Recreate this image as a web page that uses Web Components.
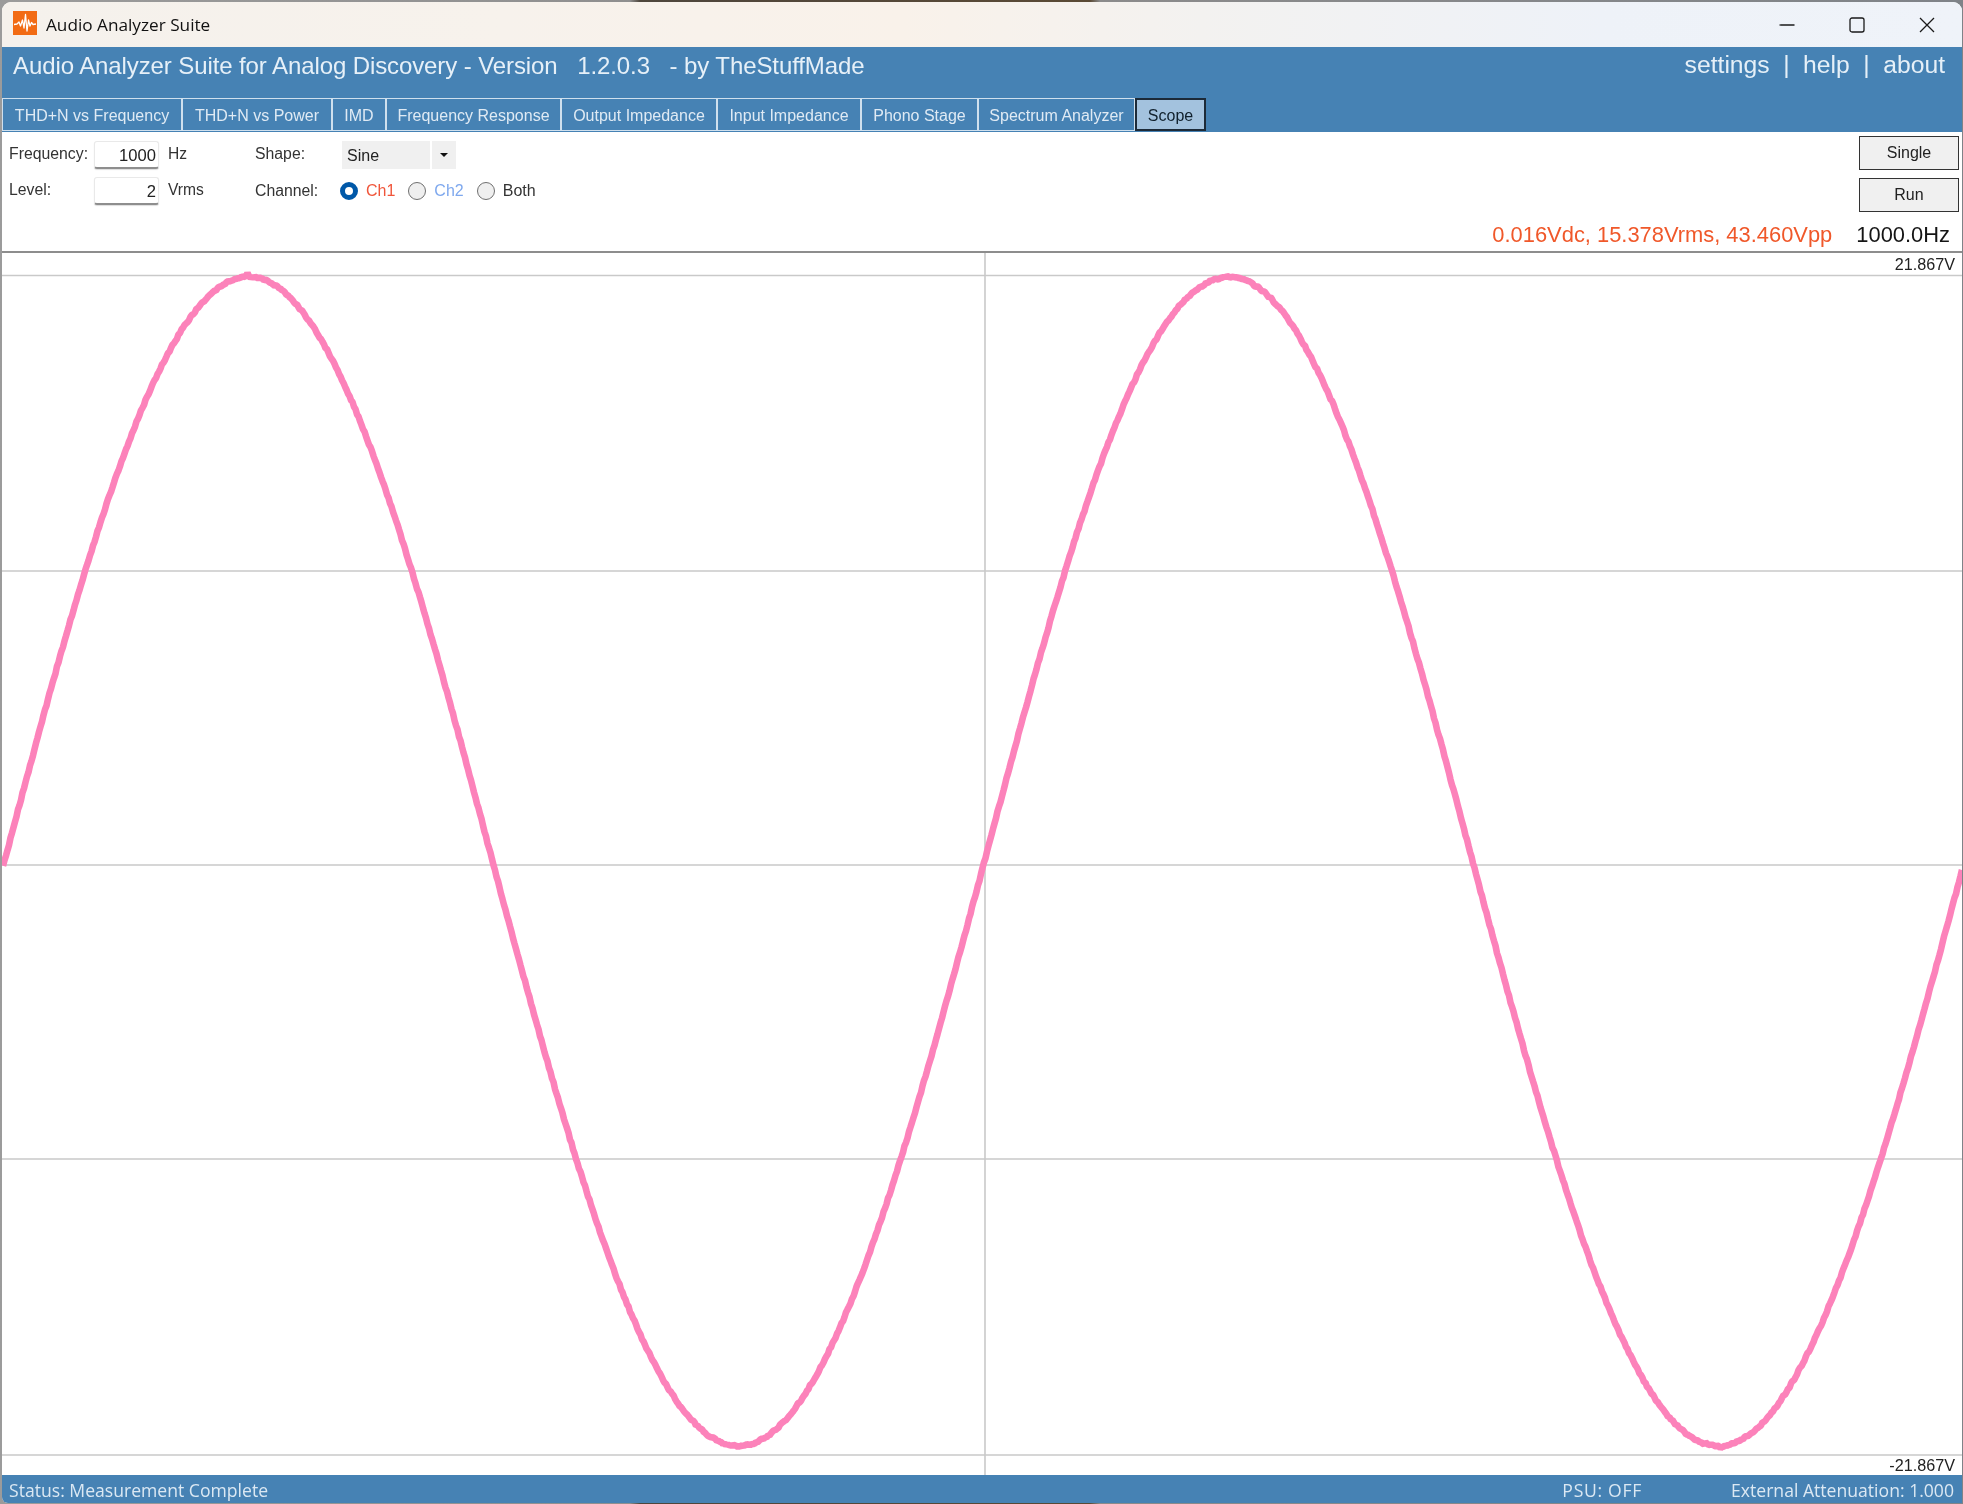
<!DOCTYPE html>
<html lang="en"><head><meta charset="utf-8"><title>Audio Analyzer Suite</title>
<style>
html,body{margin:0;padding:0;width:1963px;height:1504px;overflow:hidden}
body{background:linear-gradient(90deg,#9b9b9b 0,#8f8f8f 630px,#4e463c 640px,#5a4a35 1090px,#8b8b8b 1100px,#7f8388 1963px);font-family:"Liberation Sans",Arial,sans-serif}
</style></head><body>
<app-window>
  <title-bar>Audio Analyzer Suite</title-bar>
  <app-header>
    <tab-item w="180">THD+N vs Frequency</tab-item>
    <tab-item w="150">THD+N vs Power</tab-item>
    <tab-item w="54">IMD</tab-item>
    <tab-item w="175">Frequency Response</tab-item>
    <tab-item w="156">Output Impedance</tab-item>
    <tab-item w="144">Input Impedance</tab-item>
    <tab-item w="117">Phono Stage</tab-item>
    <tab-item w="157">Spectrum Analyzer</tab-item>
    <tab-item w="71" active>Scope</tab-item>
  </app-header>
  <control-panel></control-panel>
  <scope-plot></scope-plot>
  <status-bar></status-bar>
</app-window>
<script>
function def(name, css, html, init){
  customElements.define(name, class extends HTMLElement{
    constructor(){super();const s=this.attachShadow({mode:'open'});s.innerHTML='<style>'+css+'</style>'+(typeof html==='function'?html(this):html);}
    connectedCallback(){if(init)init(this);}
  });
}
def('app-window',`:host{display:flex;flex-direction:column;position:fixed;inset:2px 1px 1px 2px;background:#fff;border-radius:9px 9px 0 6px;overflow:hidden;color:#111}`,`<slot></slot>`);

def('title-bar',`:host{display:flex;align-items:center;height:45px;flex:none;background:linear-gradient(90deg,#f5f1ec 0,#f7f2ec 500px,#f9f2ea 900px,#f3f2f0 1200px,#eef2f8 1600px,#eff3f9 100%)}
.logo{width:24px;height:24px;margin:0 9px 3px 11px;flex:none;display:block}
.t{font:17.2px "Open Sans","Noto Sans",sans-serif;color:#111;flex:1;padding-bottom:1px}
.b{width:70px;height:45px;display:flex;align-items:center;justify-content:center}
svg.i{width:16px;height:16px;display:block;fill:none;stroke:#1a1a1a;stroke-width:1.3}`,
`<svg class="logo" viewBox="0 0 24 24"><rect width="24" height="24" fill="#f26b14"/><polyline points="1,13.5 4,13 6,11 7.5,15 9.5,9 11,17 12.5,3.5 14,20 15.5,9 17,15 18.5,11.5 20,13.5 23,13" fill="none" stroke="#fff" stroke-width="1.3" stroke-linejoin="round"/></svg>
<span class="t"><slot></slot></span>
<div class="b"><svg class="i" viewBox="0 0 16 16"><path d="M0.5 8h15"/></svg></div>
<div class="b"><svg class="i" viewBox="0 0 16 16"><rect x="1" y="1" width="14" height="14" rx="2"/></svg></div>
<div class="b"><svg class="i" viewBox="0 0 16 16"><path d="M1 1l14 14M15 1L1 15"/></svg></div>`);

def('app-header',`:host{display:flex;flex-direction:column;flex:none;height:85px;background:#4682b4;color:#e6f0f8}
.top{display:flex;justify-content:space-between;height:51px;padding:0 17px 0 11px;font-size:24px;align-items:center;box-sizing:border-box;white-space:pre}
.title{padding-bottom:14px;letter-spacing:-.1px}
.links{display:flex;padding-bottom:16px;font-size:24.7px;gap:13.5px}
.tabs{display:flex;height:33px}`,
`<div class="top"><span class="title">Audio Analyzer Suite for Analog Discovery - Version   1.2.0.3   - by TheStuffMade</span>
<span class="links"><span>settings</span><span>|</span><span>help</span><span>|</span><span>about</span></span></div>
<div class="tabs"><slot></slot></div>`);

def('tab-item',`:host{display:flex;align-items:center;justify-content:center;box-sizing:border-box;height:33px;padding-top:2px;border:1.5px solid #cfe0ee;font-size:16px;color:#dfeaf4;white-space:nowrap}
:host([active]){background:#a3c2de;color:#10202c;border:2px solid #1c2a38;padding-top:2px}`,`<slot></slot>`,
el=>{el.style.width=el.getAttribute('w')+'px';});

def('num-input',`:host{display:block;box-sizing:border-box;width:65px;height:28px;background:#fff;border:1px solid #e9e9e9;border-bottom:2px solid #8e8e8e;border-radius:3px;text-align:right;font-size:16.6px;line-height:27px;padding-right:2px;box-shadow:0 1px 1px #ddd;color:#222}`,`<slot></slot>`);

def('radio-opt',`:host{display:inline-flex;align-items:center;gap:8px;font-size:16px}
i{display:block;box-sizing:border-box;width:18px;height:18px;border-radius:50%;border:1.6px solid #6f6f6f;background:#efefef}
:host([on]) i{border:5px solid #0058a8;background:#fff}`,`<i></i><span><slot></slot></span>`);

def('combo-box',`:host{display:flex;gap:2px;height:28px;font-size:16px}
.v{width:88px;background:#f0f0f0;padding-left:5px;box-sizing:border-box;line-height:30px;color:#222}
.a{width:24px;background:#f0f0f0;display:flex;align-items:center;justify-content:center}
.a b{display:block;width:0;height:0;border:4px solid transparent;border-top:4.5px solid #111;border-bottom:0}`,
`<div class="v"><slot></slot></div><div class="a"><b></b></div>`);

def('push-btn',`:host{display:flex;align-items:center;justify-content:center;box-sizing:border-box;width:100px;height:34px;background:#f0f0f0;border:1.5px solid #333;font-size:16px;color:#222}`,`<slot></slot>`);

def('control-panel',`:host{display:flex;flex-direction:column;flex:none;height:119px;box-sizing:border-box;padding:4px 3px 0 7px;font-size:15.8px;color:#333}
.row{display:flex;justify-content:space-between;height:76px}
.f{display:grid;grid-template-columns:85px 65px 96px 87px auto;grid-template-rows:28px 28px;row-gap:8px;align-items:center;padding-top:5px}
.l{padding-bottom:2px}
.u{padding-left:9px;font-size:15.6px;padding-bottom:3px}
.ch{display:flex;gap:13px;margin-left:-2px}
.btns{display:flex;flex-direction:column;gap:8px}
.read{display:flex;justify-content:flex-end;gap:24px;font-size:21.9px;height:39px;padding:10px 9px 0 0;box-sizing:border-box}
.r{color:#f0582a}.h{color:#151515}
.c1{color:#f0553a}.c2{color:#7ea8ee}`,
`<div class="row"><div class="f">
<span class="l">Frequency:</span><num-input>1000</num-input><span class="u">Hz</span><span class="l">Shape:</span><combo-box>Sine</combo-box>
<span class="l">Level:</span><num-input>2</num-input><span class="u">Vrms</span><span>Channel:</span>
<div class="ch"><radio-opt on><span class="c1">Ch1</span></radio-opt><radio-opt><span class="c2">Ch2</span></radio-opt><radio-opt>Both</radio-opt></div>
</div><div class="btns"><push-btn>Single</push-btn><push-btn>Run</push-btn></div></div>
<div class="read"><span class="r">0.016Vdc, 15.378Vrms, 43.460Vpp</span><span class="h">1000.0Hz</span></div>`);

def('scope-plot',`:host{display:block;position:relative;flex:1;min-height:0;border-top:2px solid #8d8d8d;overflow:hidden}
svg{display:block;width:100%;height:100%}
span{position:absolute;right:7px;font-size:16.2px;color:#222;background:#fff;line-height:18px}
.a{top:2px}.b{bottom:1px}`,
`<svg viewBox="2 253 1960 1222" preserveAspectRatio="none"><g id="g" stroke="#c9c9c9" stroke-width="1.6" fill="none"></g><path id="w" fill="none" stroke="#fc82ba" stroke-width="6.6" stroke-linejoin="bevel"/></svg>
<span class="a">21.867V</span><span class="b">-21.867V</span>`,
el=>{
  const r=el.shadowRoot,g=r.getElementById('g');
  let d='';[275.5,571,865,1159,1455].forEach(y=>d+='<path d="M2 '+y+'H1962"/>');
  d+='<path d="M985 253V1475"/>';g.innerHTML=d;
  let s=12345;const rnd=()=>{s=(s*1664525+1013904223)>>>0;return s/4294967296;};
  const T=980,x0=3.5;let p='';
  const spikes={248:-3,1690:2.5,1706:-2,1721:3.5,1732:-2};
  for(let x=3;x<=1962;x+=1.5){
    const v=Math.sin(2*Math.PI*(x-x0)/T);
    let y=865-(v>0?588:581)*v+(rnd()-.5)*2.2;
    const k=Math.round(x);if(spikes[k]!==undefined)y+=spikes[k];
    p+=(p?'L':'M')+x.toFixed(1)+' '+y.toFixed(2);
  }
  r.getElementById('w').setAttribute('d',p);
});

def('status-bar',`:host{display:flex;flex:none;height:28px;background:#4682b4;color:#dbe8f3;font:17.6px "Open Sans","Noto Sans",sans-serif;align-items:center;padding:1px 8px 0 7px;box-sizing:border-box;white-space:nowrap}
.s{flex:1}.p{margin-right:89px;letter-spacing:.7px}`,
`<span class="s">Status: Measurement Complete</span><span class="p">PSU: OFF</span><span>External Attenuation: 1.000</span>`);
</script>
</body></html>
